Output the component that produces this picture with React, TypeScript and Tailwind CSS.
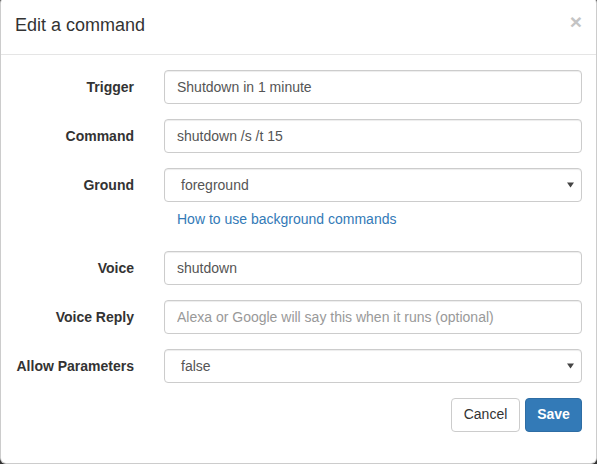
const font = { fontFamily: '"Liberation Sans", Arial, Helvetica, sans-serif' }

function Label({ text }: { text: string }) {
    return (
        <label className="w-[149px] shrink-0 pr-[15px] pt-[7px] text-right text-[14px] font-bold leading-[20px] text-[#333]">
            {text}
        </label>
    )
}

function TextField({ value, placeholder }: { value?: string; placeholder?: string }) {
    return (
        <input
            readOnly
            defaultValue={value}
            placeholder={placeholder}
            style={font}
            className="h-[34px] w-full rounded-[4px] border border-[#ccc] bg-white px-3 py-1.5 text-[14px] leading-[20px] text-[#555] shadow-[inset_0_1px_1px_rgba(0,0,0,0.075)] outline-none placeholder:text-[#999]"
        />
    )
}

function SelectField({ value }: { value: string }) {
    return (
        <div className="relative w-full">
            <div className="flex h-[34px] w-full items-center rounded-[4px] border border-[#ccc] bg-white pl-4 pr-8 text-[14px] leading-[20px] text-[#555] shadow-[inset_0_1px_1px_rgba(0,0,0,0.075)]">
                {value}
            </div>
            {/* native-looking arrow */}
            <svg className="pointer-events-none absolute right-[8px] top-[14px]" width="7" height="6" viewBox="0 0 7 6">
                <path d="M0 0.5 H7 L3.5 5.5 Z" fill="#444" />
            </svg>
        </div>
    )
}

function Row({ label, children }: { label: string; children: React.ReactNode }) {
    return (
        <div className="mb-[15px] flex">
            <Label text={label} />
            <div className="flex-1 px-[15px]">{children}</div>
        </div>
    )
}

export default function App() {
    return (
        <div style={font} className="flex h-[464px] w-[597px] flex-col overflow-hidden bg-[#333]">
            <div className="-mt-[3px] shrink-0 rounded-[6px] border border-[rgba(0,0,0,0.2)] bg-white">
                {/* Header */}
                <div className="flex items-start justify-between border-b border-[#e5e5e5] p-[15px]">
                    <h4 className="-ml-px text-[18px] leading-[25.7px] text-[#333]">Edit a command</h4>
                    <button className="mr-[-1px] mt-[-2px] text-[21px] font-bold leading-[21px] text-[#c4c4c4]">×</button>
                </div>
                {/* Body */}
                <div className="-mx-px pb-[16px] pt-[15px]">
                    <Row label="Trigger">
                        <TextField value="Shutdown in 1 minute" />
                    </Row>
                    <Row label="Command">
                        <TextField value="shutdown /s /t 15" />
                    </Row>
                    <Row label="Ground">
                        <SelectField value="foreground" />
                        <a className="mb-[7px] mt-[7px] block pl-[13px] text-[14px] leading-[20px] text-[#337ab7]" href="#">
                            How to use background commands
                        </a>
                    </Row>
                    <Row label="Voice">
                        <TextField value="shutdown" />
                    </Row>
                    <Row label="Voice Reply">
                        <TextField placeholder="Alexa or Google will say this when it runs (optional)" />
                    </Row>
                    <Row label="Allow Parameters">
                        <SelectField value="false" />
                    </Row>
                    <div className="mb-[15px] mt-px flex justify-end gap-[5px] pr-[15px]">
                        <button className="h-[34px] w-[69px] rounded-[4px] border border-[#ccc] bg-white text-[14px] text-[#333]">
                            Cancel
                        </button>
                        <button className="h-[34px] w-[57px] rounded-[4px] border border-[#2e6da4] bg-[#337ab7] text-[14px] font-bold text-white">
                            Save
                        </button>
                    </div>
                </div>
            </div>
            {/* backdrop peeking below the modal */}
            <div className="flex flex-1">
                <div className="w-[65px] bg-[#0f2424]" />
                <div className="flex-1 bg-[#35383a]" />
            </div>
        </div>
    )
}
